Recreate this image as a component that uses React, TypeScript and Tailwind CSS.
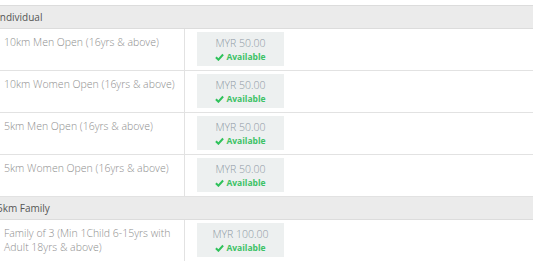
import React from "react";

const Check = () => (
  <svg width="9" height="8" viewBox="0 0 10 8" className="inline-block mr-[2px]" aria-hidden>
    <path d="M1 4.2 L3.8 7 L9 1.2" fill="none" stroke="#2fc25b" strokeWidth="2.2" />
  </svg>
);

const Price = ({ v }: { v: string }) => (
  <div className="w-[87px] h-[34px] bg-[#edf0f0] flex flex-col items-center pt-[4px]">
    <div className="text-[10.5px] leading-[14px] font-light text-[#8d99a4]">MYR {v}</div>
    <div className="text-[8.5px] leading-[13px] font-bold text-[#3cc265] flex items-center">
      <Check />
      Available
    </div>
  </div>
);

const Header = ({ t }: { t: string }) => (
  <div className="h-[23px] bg-[#ebebeb] border-b border-[#dcdcdc] flex items-center">
    <span className="ml-[-3px] text-[10px] text-[#555]">{t}</span>
  </div>
);

const Row = ({ label, price }: { label: string; price: string }) => (
  <div className="flex h-[42px] border-b border-[#e2e2e2]">
    <div className="w-[185px] border-r border-[#e2e2e2] pl-[4px] pr-[8px] pt-[6px] text-[10.5px] leading-[14px] font-light text-[#8e8e8e]">
      {label}
    </div>
    <div className="pl-[12px] pt-[3px]">
      <Price v={price} />
    </div>
  </div>
);

export default function App() {
  return (
    <div className="w-[533px] h-[261px] bg-white overflow-hidden" style={{ fontFamily: '"Open Sans", sans-serif' }}>
      <div className="h-[5px]" />
      <div className="border-t border-[#dcdcdc]">
        <Header t="Individual" />
        <Row label="10km Men Open (16yrs & above)" price="50.00" />
        <Row label="10km Women Open (16yrs & above)" price="50.00" />
        <Row label="5km Men Open (16yrs & above)" price="50.00" />
        <Row label="5km Women Open (16yrs & above)" price="50.00" />
        <Header t="5km Family" />
        <Row label="Family of 3 (Min 1Child 6-15yrs with Adult 18yrs & above)" price="100.00" />
      </div>
    </div>
  );
}
